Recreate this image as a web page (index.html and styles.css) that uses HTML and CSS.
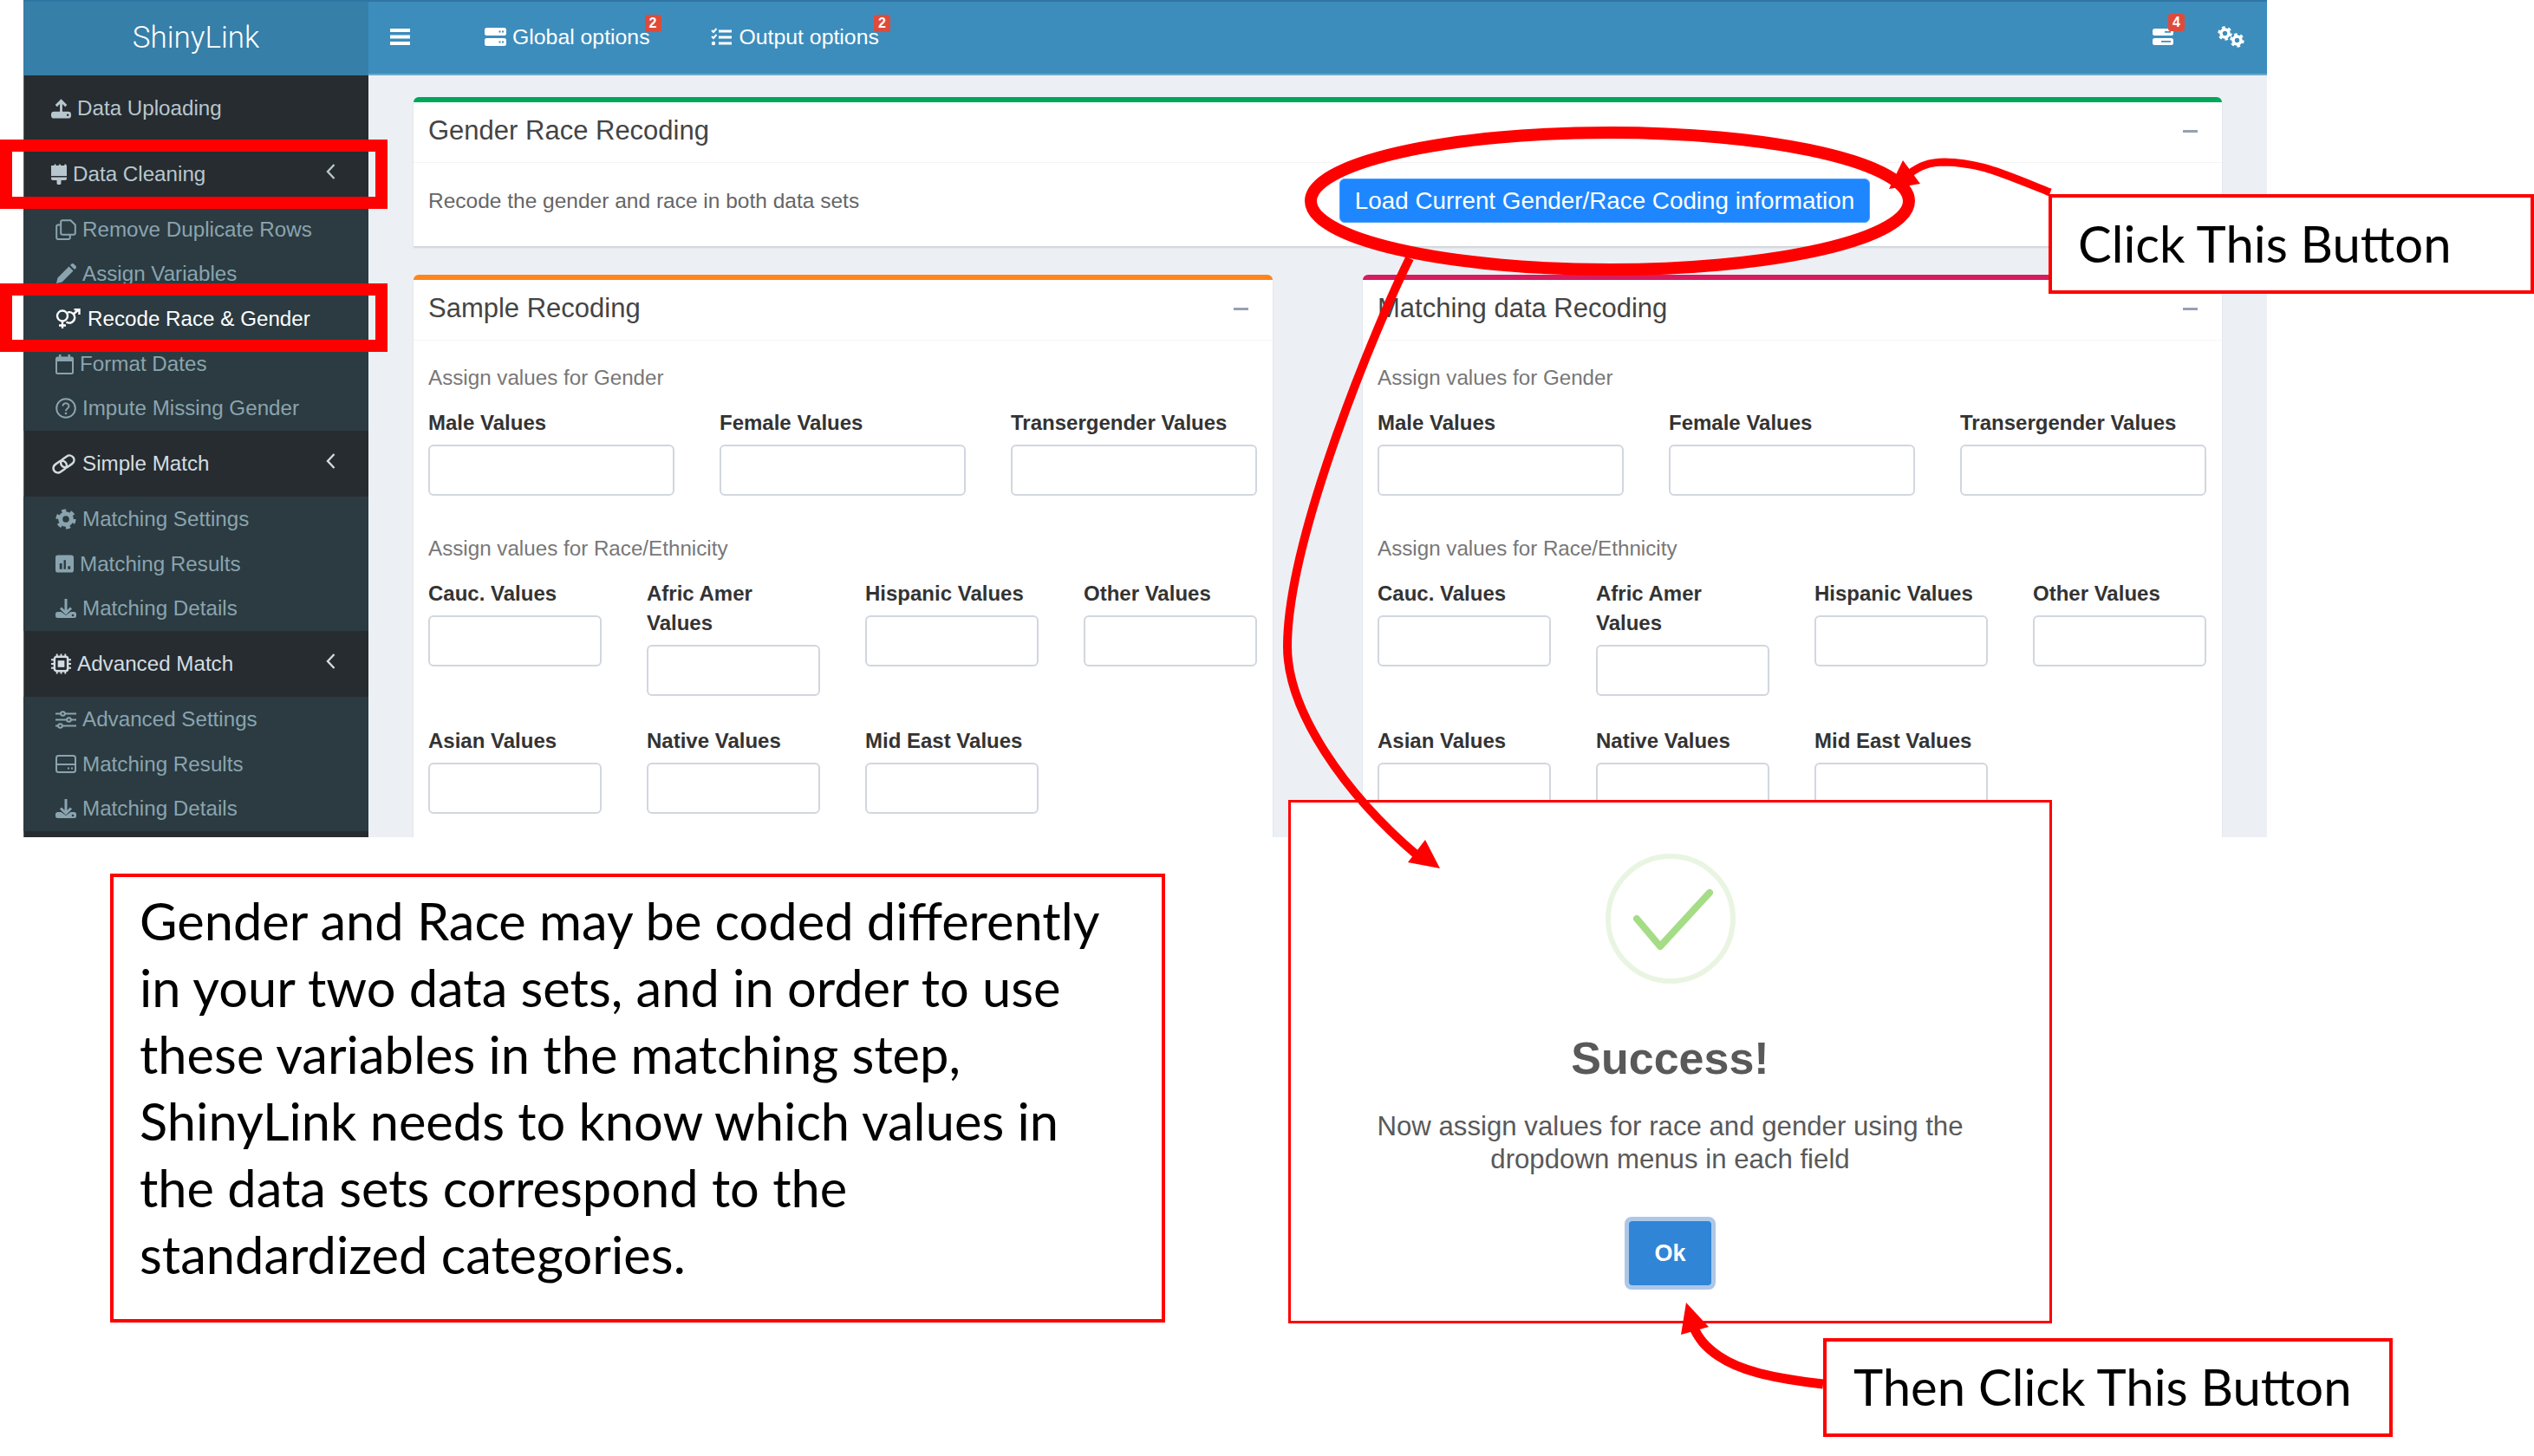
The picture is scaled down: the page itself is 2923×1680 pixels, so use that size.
FILE: index.html
```html
<!DOCTYPE html>
<html lang="en">
<head>
<meta charset="utf-8">
<title>ShinyLink - Recode Race &amp; Gender</title>
<link rel="stylesheet" href="styles.css">
</head>
<body>
<svg class="sprite" width="0" height="0" aria-hidden="true">
  <symbol id="i-gear" viewBox="0 0 24 24"><circle cx="12" cy="12" r="9.6" fill="none" stroke="currentColor" stroke-width="4" stroke-dasharray="5 5.05"/><circle cx="12" cy="12" r="6.3" fill="none" stroke="currentColor" stroke-width="5"/></symbol>
  <symbol id="i-tray-up" viewBox="0 0 24 24"><rect x="0" y="16" width="24" height="8" rx="3.500" fill="currentColor"/><circle cx="20" cy="20" r="1.300" fill="#272c30"/><path d="M12 19V3M6 9l6-6 6 6" fill="none" stroke="currentColor" stroke-width="3"/></symbol>
  <symbol id="i-tray-down" viewBox="0 0 24 24"><path d="M2.500 16h4l5.500 4 5.500-4h4a2.500 2.500 0 0 1 2.500 2.500v2a2.500 2.500 0 0 1-2.500 2.500h-19A2.500 2.500 0 0 1 0 20.500v-2A2.500 2.500 0 0 1 2.500 16z" fill="currentColor"/><circle cx="20" cy="20" r="1.300" fill="#2c3b41"/><path d="M12 1v16M6 11.500l6 6 6-6" fill="none" stroke="currentColor" stroke-width="3"/></symbol>
  <symbol id="i-brush" viewBox="0 0 18 24"><path d="M0 2h3l1.500-2L6 2h2.500L10 0l1.500 2H15l1-2 2 2v12H0zM0 15.500h18V17a2 2 0 0 1-2 2h-4.500v3a2.500 2.500 0 0 1-5 0v-3H2a2 2 0 0 1-2-2z" fill="currentColor"/></symbol>
  <symbol id="i-copy" viewBox="0 0 24 24"><path d="M8 1.200h9.500l5.300 5.300V16a1.800 1.800 0 0 1-1.800 1.800H8A1.800 1.800 0 0 1 6.200 16V3A1.800 1.800 0 0 1 8 1.200zM6 6.500H3A1.800 1.800 0 0 0 1.200 8.300v13A1.800 1.800 0 0 0 3 23h12a1.800 1.800 0 0 0 1.800-1.800V18" fill="none" stroke="currentColor" stroke-width="2"/></symbol>
  <symbol id="i-pencil" viewBox="0 0 24 24"><path d="M1 23l1.500-6.500L15.500 3.500l5 5L7.500 21.500zM17 2l1.500-1.500a1.800 1.800 0 0 1 2.500 0L23.500 3a1.800 1.800 0 0 1 0 2.500L22 7z" fill="currentColor"/></symbol>
  <symbol id="i-venus-mars" viewBox="0 0 30 24"><g fill="none" stroke="currentColor" stroke-width="2.400"><circle cx="8" cy="8.500" r="6"/><path d="M8 14.500V23M4 19.500h8"/><path d="M14 4.500a6.200 6.200 0 1 1-1.500 11M20 7 27 1M21.500 1H27.500V7"/></g></symbol>
  <symbol id="i-calendar" viewBox="0 0 21 24"><path d="M2.500 4.500h16a1.500 1.500 0 0 1 1.500 1.500v15.500a1.500 1.500 0 0 1-1.500 1.500h-16A1.500 1.500 0 0 1 1 21.500V6a1.500 1.500 0 0 1 1.500-1.500z" fill="none" stroke="currentColor" stroke-width="2"/><path d="M1 4.500h19V9H1zM4 1h2.500v5H4zM14.500 1H17v5h-2.500z" fill="currentColor"/></symbol>
  <symbol id="i-question" viewBox="0 0 24 24"><circle cx="12" cy="12" r="10.800" fill="none" stroke="currentColor" stroke-width="2"/><path d="M8.500 9.500a3.500 3.300 0 1 1 5.500 2.700c-1.300.9-2 1.500-2 3" fill="none" stroke="currentColor" stroke-width="2"/><circle cx="12" cy="18" r="1.300" fill="currentColor"/></symbol>
  <symbol id="i-link" viewBox="0 0 30 24"><g fill="none" stroke="currentColor" stroke-width="2.600" transform="rotate(-35 15 12)"><rect x="1" y="6.500" width="17" height="11" rx="5.500"/><rect x="12" y="6.500" width="17" height="11" rx="5.500"/></g></symbol>
  <symbol id="i-chart" viewBox="0 0 22 21"><rect width="22" height="21" rx="3" fill="currentColor"/><path d="M5 10h3v7H5zM10 6h2.500v11H10zM15 13.500h3V17h-3z" fill="#2c3b41"/></symbol>
  <symbol id="i-chip" viewBox="0 0 24 24"><path d="M6 0h2v4H6zM11 0h2v4h-2zM16 0h2v4h-2zM6 20h2v4H6zM11 20h2v4h-2zM16 20h2v4h-2zM0 6h4v2H0zM0 11h4v2H0zM0 16h4v2H0zM20 6h4v2h-4zM20 11h4v2h-4zM20 16h4v2h-4z" fill="currentColor"/><rect x="4" y="3.500" width="16" height="17" rx="2.500" fill="none" stroke="currentColor" stroke-width="2.600"/><rect x="8" y="8" width="8" height="8" fill="currentColor"/></symbol>
  <symbol id="i-sliders" viewBox="0 0 24 21"><g fill="none" stroke="currentColor" stroke-width="2"><path d="M0 3.500h6M11 3.500h13M0 10.500h13M18 10.500h6M0 17.500h3M8 17.500h16"/><circle cx="8.500" cy="3.500" r="2.300"/><circle cx="15.500" cy="10.500" r="2.300"/><circle cx="5.500" cy="17.500" r="2.300"/></g></symbol>
  <symbol id="i-hdd" viewBox="0 0 24 21"><rect x="1" y="1" width="22" height="19" rx="2.500" fill="none" stroke="currentColor" stroke-width="2"/><path d="M1 11h22" stroke="currentColor" stroke-width="2"/><path d="M14 14.500h2v2h-2zM18 14.500h2v2h-2z" fill="currentColor"/></symbol>
  <symbol id="i-server" viewBox="0 0 25 21"><path d="M2.500 0h20A2.500 2.500 0 0 1 25 2.500v4A2.500 2.500 0 0 1 22.500 9h-20A2.500 2.500 0 0 1 0 6.500v-4A2.500 2.500 0 0 1 2.500 0zM2.500 12h20a2.500 2.500 0 0 1 2.500 2.500v4a2.500 2.500 0 0 1-2.500 2.500h-20A2.500 2.500 0 0 1 0 18.500v-4A2.500 2.500 0 0 1 2.500 12z" fill="currentColor"/><path d="M16.500 3.500h2v2h-2zM20 3.500h2v2h-2zM16.500 15.500h2v2h-2zM20 15.500h2v2h-2z" fill="#3c8dbc"/></symbol>
  <symbol id="i-server-b" viewBox="0 0 24 19"><path d="M2.500 0h19A2.500 2.500 0 0 1 24 2.500v3A2.500 2.500 0 0 1 21.500 8h-19A2.500 2.500 0 0 1 0 5.500v-3A2.500 2.500 0 0 1 2.500 0zM2.500 11h19a2.500 2.500 0 0 1 2.500 2.500v3a2.500 2.500 0 0 1-2.500 2.500h-19A2.500 2.500 0 0 1 0 16.500v-3A2.500 2.500 0 0 1 2.500 11z" fill="currentColor"/><path d="M14 3h7v1.800h-7zM10 14h11v1.800H10z" fill="#3c8dbc"/></symbol>
  <symbol id="i-tasks" viewBox="0 0 24 21"><path d="M9 2.500h15v3H9zM9 9.500h15v3H9zM9 16.500h15v3H9z" fill="currentColor"/><path d="M1 3l2 2 3.500-4M1 10l2 2 3.500-4" fill="none" stroke="currentColor" stroke-width="2"/><circle cx="3" cy="18" r="2.200" fill="currentColor"/></symbol>
</svg>

<div class="page">
  <div class="app">
    <aside class="sidebar">
      <div class="brand">ShinyLink</div>
      <nav class="nav">
        <a class="nav-main"><svg width="23" height="24"><use href="#i-tray-up"/></svg>Data Uploading</a>
        <a class="nav-main nav-open"><svg width="18" height="24"><use href="#i-brush"/></svg>Data Cleaning<svg class="chevron" width="11" height="20" viewBox="0 0 11 20"><path d="M9.500 2 2 10l7.500 8" fill="none" stroke="currentColor" stroke-width="2.400"/></svg></a>
        <div class="nav-sub">
          <a class="nav-item"><svg width="24" height="24"><use href="#i-copy"/></svg>Remove Duplicate Rows</a>
          <a class="nav-item"><svg width="24" height="24"><use href="#i-pencil"/></svg>Assign Variables</a>
          <a class="nav-item nav-active"><svg width="30" height="24"><use href="#i-venus-mars"/></svg>Recode Race &amp; Gender</a>
          <a class="nav-item"><svg width="21" height="24"><use href="#i-calendar"/></svg>Format Dates</a>
          <a class="nav-item"><svg width="24" height="24"><use href="#i-question"/></svg>Impute Missing Gender</a>
        </div>
        <a class="nav-main nav-bright"><svg width="29" height="23"><use href="#i-link"/></svg>Simple Match<svg class="chevron" width="11" height="20" viewBox="0 0 11 20"><path d="M9.500 2 2 10l7.500 8" fill="none" stroke="currentColor" stroke-width="2.400"/></svg></a>
        <div class="nav-sub">
          <a class="nav-item"><svg width="24" height="24"><use href="#i-gear"/></svg>Matching Settings</a>
          <a class="nav-item"><svg width="21" height="21"><use href="#i-chart"/></svg>Matching Results</a>
          <a class="nav-item"><svg width="24" height="24"><use href="#i-tray-down"/></svg>Matching Details</a>
        </div>
        <a class="nav-main nav-bright"><svg width="23" height="24"><use href="#i-chip"/></svg>Advanced Match<svg class="chevron" width="11" height="20" viewBox="0 0 11 20"><path d="M9.500 2 2 10l7.500 8" fill="none" stroke="currentColor" stroke-width="2.400"/></svg></a>
        <div class="nav-sub">
          <a class="nav-item"><svg width="24" height="21"><use href="#i-sliders"/></svg>Advanced Settings</a>
          <a class="nav-item"><svg width="24" height="21"><use href="#i-hdd"/></svg>Matching Results</a>
          <a class="nav-item"><svg width="24" height="24"><use href="#i-tray-down"/></svg>Matching Details</a>
        </div>
      </nav>
    </aside>

    <div class="main">
      <header class="topbar">
        <svg class="hamburger" width="23" height="19" viewBox="0 0 23 19"><path d="M0 0h23v4H0zM0 7.500h23v4H0zM0 15h23v4H0z" fill="currentColor"/></svg>
        <a class="top-link top-global"><svg width="25" height="21"><use href="#i-server"/></svg>Global options<span class="badge badge-text">2</span></a>
        <a class="top-link top-output"><svg width="24" height="21"><use href="#i-tasks"/></svg>Output options<span class="badge badge-text">2</span></a>
        <div class="top-right">
          <a class="top-icon"><svg width="24" height="19"><use href="#i-server-b"/></svg><span class="badge badge-icon">4</span></a>
          <a class="top-cogs"><svg class="cog-a" width="17" height="17"><use href="#i-gear"/></svg><svg class="cog-b" width="17" height="17"><use href="#i-gear"/></svg></a>
        </div>
      </header>

      <div class="content">
        <section class="box box-green">
          <div class="box-header"><h3>Gender Race Recoding</h3><span class="minus"></span></div>
          <div class="box-body intro">
            <p class="intro-text">Recode the gender and race in both data sets</p>
            <button class="load-btn">Load Current Gender/Race Coding information</button>
          </div>
        </section>

        <div class="box-pair">
          <section class="box box-orange">
            <div class="box-header"><h3>Sample Recoding</h3><span class="minus"></span></div>
            <div class="box-body form">
              <p class="form-title">Assign values for Gender</p>
              <div class="grid3">
                <div class="field"><label>Male Values</label><input type="text"></div>
                <div class="field"><label>Female Values</label><input type="text"></div>
                <div class="field"><label>Transergender Values</label><input type="text"></div>
              </div>
              <p class="form-title form-title-2">Assign values for Race/Ethnicity</p>
              <div class="grid4">
                <div class="field"><label>Cauc. Values</label><input type="text"></div>
                <div class="field"><label>Afric Amer Values</label><input type="text"></div>
                <div class="field"><label>Hispanic Values</label><input type="text"></div>
                <div class="field"><label>Other Values</label><input type="text"></div>
                <div class="field"><label>Asian Values</label><input type="text"></div>
                <div class="field"><label>Native Values</label><input type="text"></div>
                <div class="field"><label>Mid East Values</label><input type="text"></div>
              </div>
            </div>
          </section>
          <section class="box box-pink">
            <div class="box-header"><h3>Matching data Recoding</h3><span class="minus"></span></div>
            <div class="box-body form">
              <p class="form-title">Assign values for Gender</p>
              <div class="grid3">
                <div class="field"><label>Male Values</label><input type="text"></div>
                <div class="field"><label>Female Values</label><input type="text"></div>
                <div class="field"><label>Transergender Values</label><input type="text"></div>
              </div>
              <p class="form-title form-title-2">Assign values for Race/Ethnicity</p>
              <div class="grid4">
                <div class="field"><label>Cauc. Values</label><input type="text"></div>
                <div class="field"><label>Afric Amer Values</label><input type="text"></div>
                <div class="field"><label>Hispanic Values</label><input type="text"></div>
                <div class="field"><label>Other Values</label><input type="text"></div>
                <div class="field"><label>Asian Values</label><input type="text"></div>
                <div class="field"><label>Native Values</label><input type="text"></div>
                <div class="field"><label>Mid East Values</label><input type="text"></div>
              </div>
            </div>
          </section>
        </div>
      </div>
    </div>
  </div>

  <div class="marker marker-cleaning"></div>
  <div class="marker marker-recode"></div>

  <div class="callout callout-click">Click This Button</div>
  <div class="callout callout-then">Then Click This Button</div>
  <div class="callout callout-note">Gender and Race may be coded differently<br>in your two data sets, and in order to use<br>these variables in the matching step,<br>ShinyLink needs to know which values in<br>the data sets correspond to the<br>standardized categories.</div>

  <div class="modal">
    <svg class="modal-check" width="156" height="156" viewBox="0 0 156 156"><circle cx="78" cy="78" r="72" fill="none" stroke="#e9f5e2" stroke-width="6"/><path d="M39 78l27 32 57-62" fill="none" stroke="#a5dc86" stroke-width="8" stroke-linecap="round" stroke-linejoin="round"/></svg>
    <h2>Success!</h2>
    <p>Now assign values for race and gender using the<br>dropdown menus in each field</p>
    <button class="ok-btn">Ok</button>
  </div>

  <svg class="annotations" width="2923" height="1680" viewBox="0 0 2923 1680" aria-hidden="true">
    <g fill="none" stroke="#ff0000">
      <ellipse cx="1857" cy="232" rx="345" ry="79" stroke-width="14"/>
      <path d="M2365 222C2310 200 2285 188 2243 187C2225 187 2214 192 2203 200" stroke-width="9"/>
      <path d="M1626 298C1590 370 1485 620 1485 746C1485 820 1550 915 1636 988" stroke-width="10"/>
      <path d="M2103 1597C2040 1590 2005 1580 1983 1565C1968 1555 1959 1545 1952 1528" stroke-width="11"/>
    </g>
    <g fill="#ff0000">
      <path d="M2195 185 2215 212 2179 218z"/>
      <path d="M1644 969 1661 1002 1624 995z"/>
      <path d="M1945 1503 1971 1531 1939 1540z"/>
    </g>
  </svg>
</div>
</body>
</html>
```

FILE: styles.css
```css
* { box-sizing: border-box; }
html, body { margin: 0; padding: 0; background: #fff; }
body { font-family: "Liberation Sans", Arial, sans-serif; color: #333; }
h2, h3, p { margin: 0; }
a { display: flex; align-items: center; }
.sprite { position: absolute; }

.page { position: relative; width: 2923px; height: 1680px; overflow: hidden; }
.app { display: flex; width: 2588px; height: 966px; margin-left: 27px; overflow: hidden; background: #ecf0f5; }

/* sidebar */
.sidebar { flex: none; width: 398px; background: #272c30; box-shadow: inset 1px 0 0 #555c60; }
.brand { height: 87px; display: flex; align-items: center; justify-content: center; padding-bottom: 2px; background: #367fa9; border-top: 2px solid #2f75a3; color: #fff; font-family: Roboto, "Liberation Sans", sans-serif; font-weight: 300; font-size: 35px; }
.nav { display: flex; flex-direction: column; }
.nav-main { height: 76px; flex: none; padding: 0 38px 0 32px; gap: 7px; color: #b8c7ce; font-size: 24.2px; }
.nav-bright { color: #d3dde1; }
.nav-sub { display: flex; flex-direction: column; background: #2c3b41; }
.nav-item { height: 51.67px; flex: none; padding-left: 37px; gap: 7px; color: #8aa4af; font-size: 24.2px; }
.nav-item svg { flex: none; }
.nav-active { color: #fff; }
.chevron { margin-left: auto; margin-top: -6px; }

/* top bar */
.main { flex: 1; display: flex; flex-direction: column; min-width: 0; }
.topbar { height: 87px; flex: none; display: flex; align-items: center; padding-bottom: 2px; background: #3c8dbc; border-top: 2px solid #2f75a3; border-bottom: 2px solid #6fa9cc; color: #fff; font-size: 24.8px; }
.hamburger { margin-left: 25px; }
.top-link { position: relative; gap: 7px; }
.top-global { margin-left: 86px; }
.top-output { margin-left: 70px; gap: 9px; }
.badge { position: absolute; display: flex; align-items: center; justify-content: center; width: 19px; height: 20px; border-radius: 3px; background: #e04b39; color: #fff; font-size: 16px; font-weight: 700; }
.badge-text { top: -12px; right: -13px; }
.top-right { margin-left: auto; display: flex; align-items: center; gap: 51px; padding-right: 26px; }
.top-icon { position: relative; }
.badge-icon { top: -17px; right: -13px; }
.top-cogs { position: relative; width: 31px; height: 25px; }
.cog-a { position: absolute; left: 0; top: 0; }
.cog-b { position: absolute; right: 0; bottom: 0; }

/* content */
.content { flex: 1; display: flex; flex-direction: column; gap: 33px; padding: 25px 52px 0 52px; min-height: 0; }
.box { background: #fff; border-top: 6px solid; border-radius: 6px 6px 0 0; box-shadow: 0 2px 2px rgba(0, 0, 0, .12); }
.box-green { border-top-color: #00a65a; flex: none; }
.box-orange { border-top-color: #ff851b; }
.box-pink { border-top-color: #d81b60; }
.box-pair { display: grid; grid-template-columns: 991px 991px; gap: 104px; flex: 1; }
.box-header { display: flex; align-items: center; justify-content: space-between; height: 70px; padding: 0 28px 3px 17px; border-bottom: 1px solid #f4f4f4; }
.box-header h3 { font-size: 31px; font-weight: 400; color: #444; }
.minus { width: 17px; height: 3px; background: #97a0b3; }
.intro { display: flex; align-items: flex-start; height: 96px; padding: 18px 17px 0; }
.intro-text { width: 1051px; font-size: 24.5px; line-height: 51px; color: #666; }
.load-btn { width: 612px; height: 51px; padding: 0; border: 1px solid #4a9dff; border-radius: 6px; background: #1e87ff; color: #fff; font-family: inherit; font-size: 27.8px; }

.form { padding: 28px 18px 0 17px; }
.form-title { height: 30px; line-height: 30px; font-size: 24.2px; color: #777; }
.form-title-2 { margin-top: 46px; }
.grid3, .grid4 { display: grid; margin-top: 20px; column-gap: 52px; }
.grid3 { grid-template-columns: repeat(3, 1fr); }
.grid4 { grid-template-columns: repeat(4, 1fr); row-gap: 35px; }
.field label { display: block; margin-bottom: 8px; font-size: 24px; line-height: 34px; font-weight: 700; color: #333; }
.field input { display: block; width: 100%; height: 59px; border: 2px solid #d2d6de; border-radius: 6px; background: #fff; }

/* annotations over the app */
.marker { position: absolute; left: 0; width: 447px; border: 14px solid #ff0000; }
.marker-cleaning { top: 161px; height: 80px; }
.marker-recode { top: 327px; height: 79px; }
.callout { position: absolute; display: flex; align-items: center; background: #fff; border: 4px solid #ff0000; color: #000; font-family: Lato, "Noto Sans", sans-serif; }
.callout-click { left: 2363px; top: 224px; width: 560px; height: 115px; padding-left: 30px; padding-bottom: 3px; font-size: 58px; }
.callout-then { left: 2103px; top: 1544px; width: 657px; height: 114px; padding-left: 31px; padding-bottom: 3px; font-size: 58px; }
.callout-note { left: 127px; top: 1008px; width: 1217px; height: 518px; padding-left: 30px; padding-bottom: 24px; font-size: 59.6px; line-height: 77px; }

.modal { position: absolute; left: 1486px; top: 923px; width: 881px; height: 604px; display: flex; flex-direction: column; align-items: center; background: #fff; border: 3px solid #ff0000; color: #595959; }
.modal-check { margin-top: 56px; }
.modal h2 { margin-top: 53px; font-size: 52px; line-height: 60px; font-weight: 700; }
.modal p { margin-top: 30px; font-size: 31.2px; line-height: 38px; text-align: center; }
.ok-btn { margin-top: 47px; width: 105px; height: 84px; padding: 0; border: 5px solid #adc7e8; border-radius: 8px; background: #3085d6; background-clip: padding-box; color: #fff; font-family: inherit; font-size: 27px; font-weight: 700; }

.annotations { position: absolute; left: 0; top: 0; pointer-events: none; }
```
